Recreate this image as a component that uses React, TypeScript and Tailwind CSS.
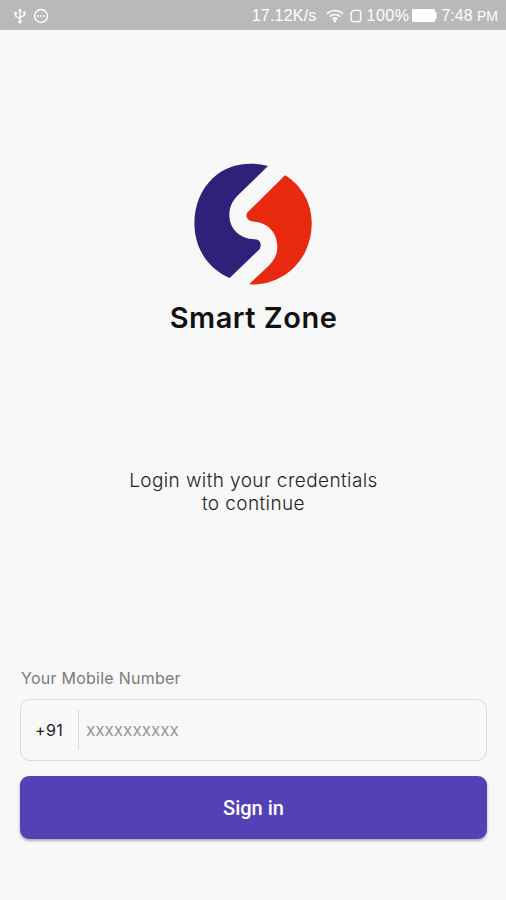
function UsbIcon() {
  return (
    <svg width="14" height="16" viewBox="0 0 14 16" fill="none" stroke="white" strokeWidth="1.3">
      <path d="M7 2v11M2.5 5.5v2.3L7 10.7M11.5 5v2L7 9.5" />
      <path d="M7 .3 9 3.2H5zM1.2 4h2.6v2.4H1.2zM10.2 3.5h2.6v2.4h-2.6z" fill="white" stroke="none" />
      <circle cx="7" cy="13.7" r="1.7" fill="white" stroke="none" />
    </svg>
  )
}

function MessageIcon() {
  return (
    <svg width="16" height="16" viewBox="0 0 16 16" fill="none" stroke="white" strokeWidth="1.4">
      <circle cx="8" cy="8" r="6.5" />
      <path d="M4.2 8h1.8M7.1 8h1.8M10 8h1.8" strokeWidth="1.6" />
    </svg>
  )
}

function WifiIcon() {
  return (
    <svg width="18" height="14" viewBox="0 0 18 14" fill="none" stroke="white" strokeWidth="1.6">
      <path d="M1 4.8C5.5.4 12.5.4 17 4.8M3.8 7.7c3-2.9 7.4-2.9 10.4 0M6.4 10.3c1.5-1.4 3.7-1.4 5.2 0" />
      <circle cx="9" cy="12" r="1.4" fill="white" stroke="none" />
    </svg>
  )
}

function SimIcon() {
  return (
    <svg width="12" height="14" viewBox="0 0 12 14" fill="none" stroke="white" strokeWidth="1.4">
      <path d="M3.4 1.4h5.2q2 0 2 2v7.2q0 2-2 2H3.2q-2 0-2-2V3.6z" />
    </svg>
  )
}

function BatteryIcon() {
  return (
    <svg width="26" height="13" viewBox="0 0 26 13" fill="white">
      <rect width="23" height="13" rx="1" />
      <path d="M23 3h1.5v7H23z" />
    </svg>
  )
}

function Logo() {
  return (
    <svg className="mr-px" width="136" height="140" viewBox="0 0 408 420">
      <path
        fill="#2e217a"
        d="M249 33C187 17 124 29 83 70C28 122 16 208 40 272C58 318 91 350 134 369L222 284Q228 278 227 268Q225 253 208 253C165 251 133 222 133 180C133 150 148 131 165 115Z"
      />
      <path
        fill="#e8290f"
        d="M300 61L188 172Q183 178 185 186Q190 200 208 200C250 203 277 235 277 275C277 305 262 322 245 338L192 388C260 393 331 355 363 286C400 202 377 108 300 61Z"
      />
    </svg>
  )
}

function StatusBar() {
  return (
    <div className="flex h-[30px] items-center bg-[#b9b9b9] pt-px pl-[13px] pr-[8px] font-['Liberation_Sans',sans-serif] text-[16px] text-white">
      <UsbIcon />
      <span className="ml-[6px]"><MessageIcon /></span>
      <span className="ml-auto tracking-[0.2px]">17.12K/s</span>
      <span className="ml-[10px]"><WifiIcon /></span>
      <span className="ml-[6px]"><SimIcon /></span>
      <span className="ml-[4px] tracking-[0.5px]">100%</span>
      <span className="ml-[3px]"><BatteryIcon /></span>
      <span className="ml-[3px]">7:48 <span className="text-[14px]">PM</span></span>
    </div>
  )
}

export default function App() {
  return (
    <div className="flex h-[900px] w-[506px] flex-col bg-[#f8f8f8] font-['Inter',sans-serif]">
      <StatusBar />
      <main className="flex flex-1 flex-col pl-5 pr-[19px]">
        <div className="flex flex-col items-center pt-[125px]">
          <Logo />
          <h1 className="mt-[5px] text-[29px] leading-[36px] font-semibold tracking-[0.5px] text-[#111]">
            Smart Zone
          </h1>
        </div>
        <p className="mt-[133px] text-center text-[19px] leading-[23px] font-light tracking-[0.4px] text-[#222]">
          Login with your credentials
          <br />
          to continue
        </p>
        <label className="mt-[153px] pl-px text-[16px] leading-[20px] tracking-[0.25px] text-[#7b7b7b]">
          Your Mobile Number
        </label>
        <div className="mt-[11px] flex h-[62px] items-center rounded-[10px] border border-[#cfdfdb] pl-[14px]">
          <span className="w-[43px] text-[16px] tracking-[0.4px] text-[#222]">+91</span>
          <span className="h-[40px] w-px bg-[#cfdfdb]" />
          <span className="ml-[7px] pt-px text-[17px] text-[#999]">xxxxxxxxxx</span>
        </div>
        <button className="mt-[15px] h-[63px] rounded-[9px] bg-[#5341b8] pt-px font-['Roboto',sans-serif] text-[20px] font-medium text-white shadow-[0_2px_3px_rgba(0,0,0,0.3)]">
          Sign in
        </button>
      </main>
    </div>
  )
}
